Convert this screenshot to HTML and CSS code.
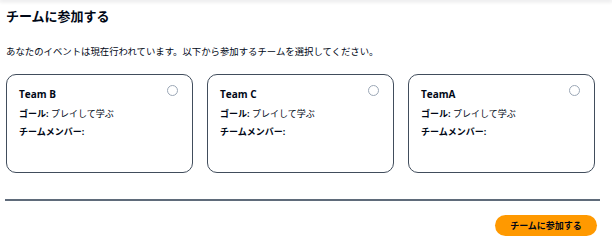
FILE: index.html
```html
<!DOCTYPE html>
<html lang="ja">
<head>
<meta charset="utf-8">
<link rel="stylesheet" href="styles.css">
</head>
<body>
<div class="topshadow"></div>
<main class="page">
  <h1 class="title">チームに参加する</h1>
  <p class="desc">あなたのイベントは現在行われています。以下から参加するチームを選択してください。</p>
  <div class="cards">
    <div class="card">
      <div class="card-head"><span class="team">Team B</span><span class="radio"></span></div>
      <div class="goal"><b>ゴール:</b> プレイして学ぶ</div>
      <div class="members">チームメンバー:</div>
    </div>
    <div class="card">
      <div class="card-head"><span class="team">Team C</span><span class="radio"></span></div>
      <div class="goal"><b>ゴール:</b> プレイして学ぶ</div>
      <div class="members">チームメンバー:</div>
    </div>
    <div class="card">
      <div class="card-head"><span class="team">TeamA</span><span class="radio"></span></div>
      <div class="goal"><b>ゴール:</b> プレイして学ぶ</div>
      <div class="members">チームメンバー:</div>
    </div>
  </div>
  <hr class="divider">
  <div class="actions"><button class="join">チームに参加する</button></div>
</main>
</body>
</html>
```
FILE: styles.css
```css
html, body {
  margin: 0;
  padding: 0;
  background: #ffffff;
}
body {
  font-family: "Open Sans", "Noto Sans CJK JP", sans-serif;
  color: #000716;
}
.topshadow {
  height: 0;
  box-shadow: 0 0 4px 1px rgba(0, 7, 22, 0.18);
}
.page {
  padding: 7px 16px 0 6px;
}
.title {
  margin: 0;
  font-size: 13px;
  line-height: 18px;
  font-weight: 700;
}
.desc {
  margin: 20px 0 0;
  font-size: 9.4px;
  line-height: 14px;
}
.cards {
  display: grid;
  grid-template-columns: repeat(3, 187px);
  column-gap: 14px;
  margin-top: 15px;
}
.card {
  height: 99px;
  box-sizing: border-box;
  border: 1.5px solid #414d5c;
  border-radius: 10px;
  padding: 12px 14px 0 12px;
}
.card-head {
  display: flex;
  justify-content: space-between;
  align-items: flex-start;
}
.team {
  font-size: 10px;
  line-height: 14px;
  font-weight: 700;
}
.radio {
  width: 9px;
  height: 9px;
  border: 1px solid #9ba7b6;
  border-radius: 50%;
  margin-top: -2px;
}
.goal {
  margin-top: 6px;
  font-size: 9px;
  line-height: 14px;
}
.goal b {
  font-weight: 700;
}
.members {
  margin-top: 4px;
  font-size: 9px;
  line-height: 14px;
  font-weight: 700;
}
.divider {
  margin: 26px -4px 0 -1px;
  border: 0;
  height: 2px;
  background: #5f6b7a;
}
.actions {
  display: flex;
  justify-content: flex-end;
  margin: 14px -1px 0 0;
}
.join {
  width: 102px;
  height: 21px;
  padding: 0;
  border: 0;
  border-radius: 11px;
  background: #ff9900;
  color: #000716;
  font-family: "Open Sans", "Noto Sans CJK JP", sans-serif;
  font-size: 9px;
  font-weight: 700;
}
```
